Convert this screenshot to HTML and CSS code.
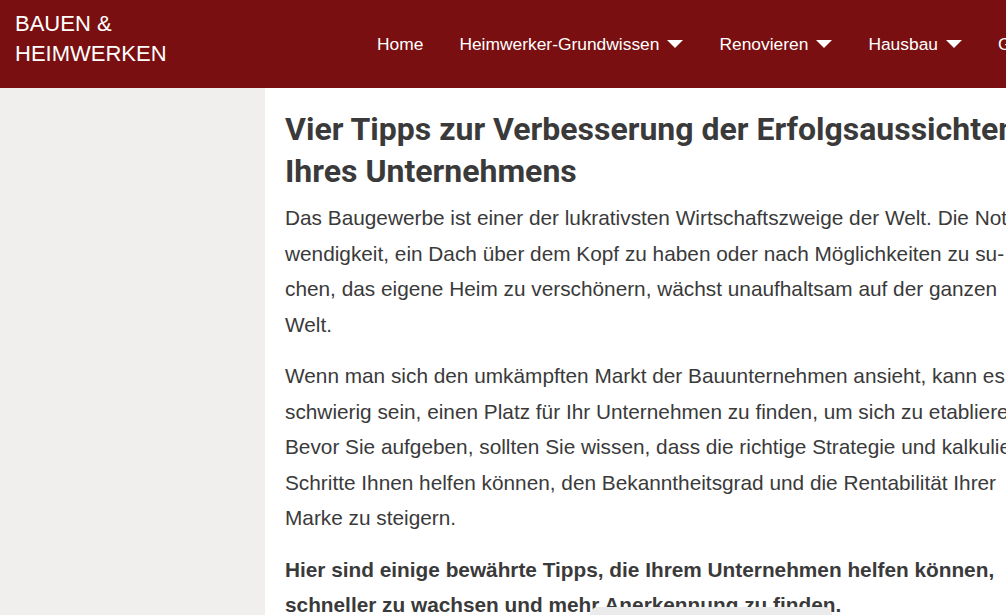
FILE: index.html
```html
<!DOCTYPE html>
<html lang="de">
<head>
<meta charset="utf-8">
<title>Bauen &amp; Heimwerken</title>
<link rel="stylesheet" href="styles.css">
</head>
<body>
<div class="page">
  <header class="site-header">
    <div class="brand">BAUEN &amp;<br>HEIMWERKEN</div>
    <nav class="main-nav">
      <a class="nav-item" href="#">Home</a>
      <a class="nav-item" href="#">Heimwerker-Grundwissen <span class="caret"></span></a>
      <a class="nav-item" href="#">Renovieren <span class="caret"></span></a>
      <a class="nav-item" href="#">Hausbau <span class="caret"></span></a>
      <a class="nav-item" href="#">Garten <span class="caret"></span></a>
    </nav>
  </header>
  <div class="layout">
    <aside class="sidebar"></aside>
    <main class="content">
      <h1 class="title">Vier Tipps zur Verbesserung der Erfolgsaussichten Ihres Unternehmens</h1>
      <p class="text">Das Baugewerbe ist einer der lukrativsten Wirtschaftszweige der Welt. Die Not&shy;wendigkeit, ein Dach über dem Kopf zu haben oder nach Möglichkeiten zu su&shy;chen, das eigene Heim zu verschönern, wächst unaufhaltsam auf der ganzen Welt.</p>
      <p class="text">Wenn man sich den umkämpften Markt der Bauunternehmen ansieht, kann es schwierig sein, einen Platz für Ihr Unternehmen zu finden, um sich zu etablieren. Bevor Sie aufgeben, sollten Sie wissen, dass die richtige Strategie und kalkulierte Schritte Ihnen helfen können, den Bekanntheitsgrad und die Rentabilität Ihrer Marke zu steigern.</p>
      <p class="text strong">Hier sind einige bewährte Tipps, die Ihrem Unternehmen helfen können, schneller zu wachsen und mehr Anerkennung zu finden.</p>
    </main>
  </div>
</div>
<div class="notice"></div>
</body>
</html>
```
FILE: styles.css
```css
html, body {
  margin: 0;
  padding: 0;
  overflow: hidden;
  background: #ffffff;
}
.page {
  width: 1300px;
  font-family: "Liberation Sans", Arial, sans-serif;
}
.site-header {
  display: flex;
  height: 88px;
  background: #790f10;
  color: #ffffff;
}
.brand {
  flex: 0 0 auto;
  width: 344px;
  margin-left: 15px;
  padding-top: 9px;
  font-size: 22px;
  line-height: 30px;
}
.main-nav {
  display: flex;
  align-items: center;
  white-space: nowrap;
}
.nav-item {
  display: flex;
  align-items: center;
  padding: 0 18px;
  color: #ffffff;
  text-decoration: none;
  font-size: 17.4px;
}
.caret {
  display: inline-block;
  width: 0;
  height: 0;
  margin-left: 8px;
  border-left: 8px solid transparent;
  border-right: 8px solid transparent;
  border-top: 8px solid #ffffff;
}
.layout {
  display: grid;
  grid-template-columns: 265px 1fr;
  min-height: 700px;
}
.sidebar {
  background: #f0efed;
}
.content {
  width: 755px;
  padding: 20px 0 0 20px;
  color: #3a3a3a;
}
.title {
  margin: 0 0 8px;
  font-family: Roboto, "Liberation Sans", sans-serif;
  font-weight: 700;
  font-size: 32px;
  line-height: 42px;
  color: #3a3a3a;
}
.text {
  margin: 0 0 16px;
  font-size: 20.8px;
  line-height: 35.5px;
  hyphens: manual;
}
.strong {
  font-weight: 700;
}
.notice {
  position: fixed;
  left: 590px;
  bottom: -32px;
  width: 242px;
  height: 40px;
  background: #ebebeb;
  border-radius: 8px 8px 0 0;
}
```
